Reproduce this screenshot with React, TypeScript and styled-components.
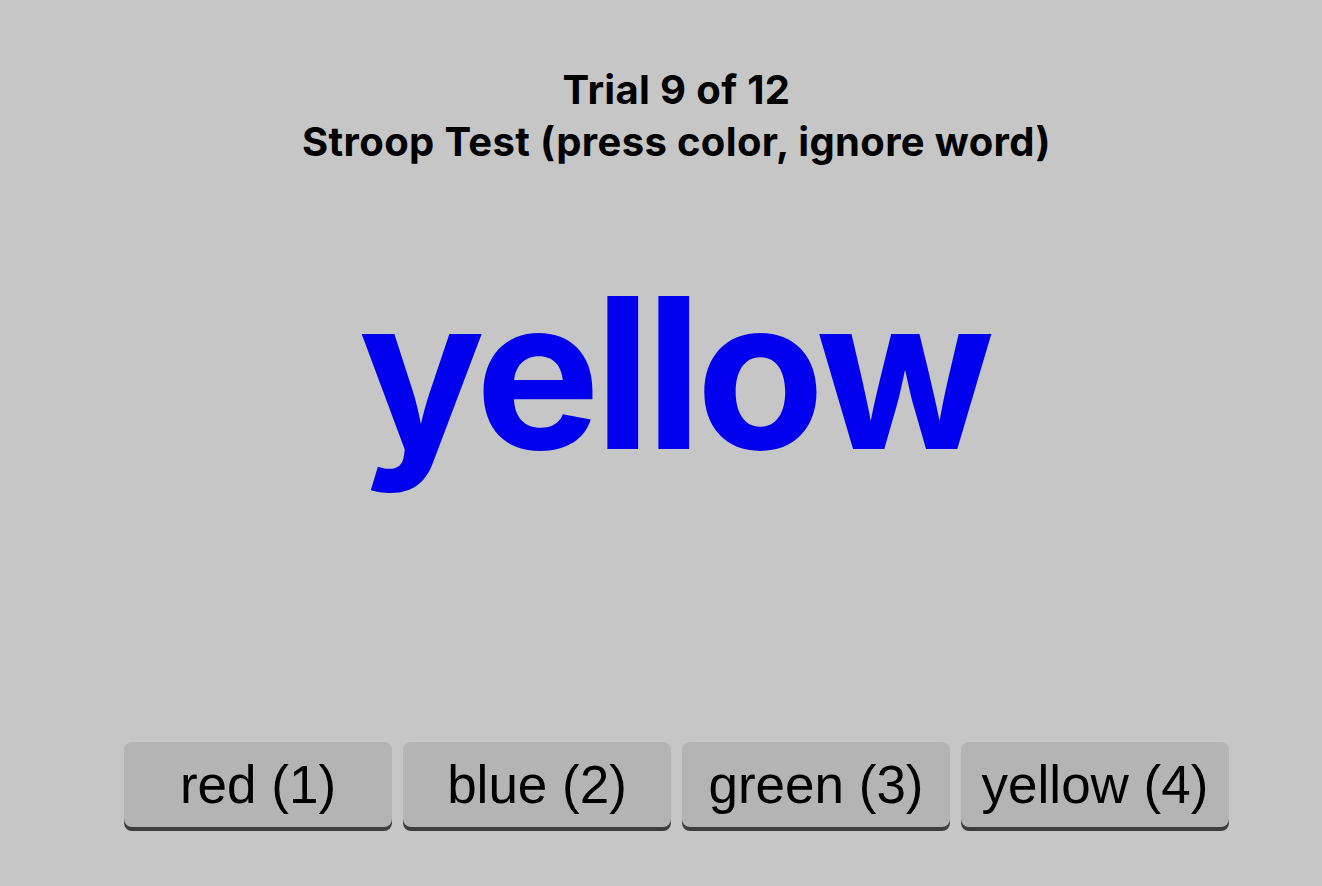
import React from 'react';
import styled, { createGlobalStyle } from 'styled-components';

const GlobalStyle = createGlobalStyle`
  html, body {
    margin: 0;
    padding: 0;
    background: #c6c6c6;
  }
  body {
    font-family: Inter, 'Noto Sans', sans-serif;
  }
`;

const Page = styled.div`
  height: 886px;
  padding-left: 31px;
  display: flex;
  flex-direction: column;
  align-items: center;
  box-sizing: border-box;
`;

const Header = styled.div`
  margin-top: 64px;
  text-align: center;
  font-family: Inter, sans-serif;
  font-weight: 700;
  font-size: 40px;
  line-height: 52px;
  letter-spacing: 0.35px;
  color: #000;
`;

const Stimulus = styled.div<{ $ink: string }>`
  margin-top: 85px;
  margin-right: 6px;
  font-family: Inter, sans-serif;
  font-weight: 700;
  font-size: 210px;
  line-height: 240px;
  letter-spacing: -6px;
  color: ${(p) => p.$ink};
`;

const Choices = styled.div`
  margin-top: auto;
  margin-bottom: 59px;
  display: flex;
  gap: 11px;
`;

const Choice = styled.button`
  width: 268px;
  height: 85px;
  border: none;
  border-radius: 8px;
  background: #b4b4b4;
  box-shadow: 0 4px 0 #3e3e3e;
  font-family: 'Liberation Sans', Arial, sans-serif;
  font-size: 53px;
  color: #000;
  padding: 0;
  cursor: pointer;
`;

const options = ['red (1)', 'blue (2)', 'green (3)', 'yellow (4)'];

export default function App() {
  return (
    <>
      <GlobalStyle />
      <Page>
        <Header>
          <div>Trial 9 of 12</div>
          <div>Stroop Test (press color, ignore word)</div>
        </Header>
        <Stimulus $ink="#0000ee">yellow</Stimulus>
        <Choices>
          {options.map((o) => (
            <Choice key={o}>{o}</Choice>
          ))}
        </Choices>
      </Page>
    </>
  );
}
